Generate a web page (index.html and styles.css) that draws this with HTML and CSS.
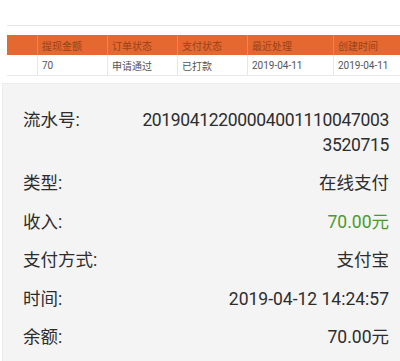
FILE: index.html
```html
<!DOCTYPE html>
<html>
    <head>
        <meta charset="UTF-8">
        <title>提现记录</title>
        <link rel="stylesheet" href="styles.css">
    </head>
    <body>
        <div class="toolbar"></div>
        <table class="records">
            <tr class="head">
                <td class="c0"></td>
                <td class="c1">提现金额</td>
                <td class="c2">订单状态</td>
                <td class="c3">支付状态</td>
                <td class="c4">最近处理</td>
                <td class="c5">创建时间</td>
            </tr>
            <tr>
                <td></td>
                <td>70</td>
                <td>申请通过</td>
                <td>已打款</td>
                <td>2019-04-11</td>
                <td>2019-04-11</td>
            </tr>
        </table>
        <div class="detail">
            <div class="row">
                <div class="label">流水号:</div>
                <div class="value serial">201904122000040011100470033520715</div>
            </div>
            <div class="row">
                <div class="label">类型:</div>
                <div class="value">在线支付</div>
            </div>
            <div class="row">
                <div class="label">收入:</div>
                <div class="value green">70.00元</div>
            </div>
            <div class="row">
                <div class="label">支付方式:</div>
                <div class="value">支付宝</div>
            </div>
            <div class="row">
                <div class="label">时间:</div>
                <div class="value">2019-04-12 14:24:57</div>
            </div>
            <div class="row">
                <div class="label">余额:</div>
                <div class="value">70.00元</div>
            </div>
        </div>
    </body>
</html>
```
FILE: styles.css
```css
html, body{
    height: 361px;
    overflow: hidden;
}
body{
    margin: 0;
    background: #fff;
    font-family: Roboto, "Noto Sans CJK SC", sans-serif;
    color: #2d2d2d;
}

.toolbar{
    height: 25px;
    margin-left: 7px;
    border-bottom: 1px solid #e6e6e6;
}

.records{
    margin: 9px 0 0 7px;
    width: 393px;
    border-collapse: collapse;
    table-layout: fixed;
    font-size: 10px;
    color: #555;
}
.records td{
    height: 20px;
    padding: 0 0 0 4px;
    border-left: 1px solid #e8e8e8;
    border-bottom: 1px solid #e8e8e8;
    white-space: nowrap;
    overflow: hidden;
}
.records td:first-child{
    border-left: none;
}
.records .head td{
    background: #e4682f;
    color: #9a4219;
    border-left: 1px solid #ea8557;
    border-bottom: none;
}
.records .head td:first-child{
    border-left: none;
}
.c0{ width: 26px; }
.c1{ width: 65px; }
.c2{ width: 65px; }
.c3{ width: 65px; }
.c4{ width: 81px; }

.detail{
    margin: 7px 0 0 2px;
    padding: 17px 11px 4px 20px;
    background: #f4f4f4;
    border-top: 1px solid #ececec;
    border-left: 1px solid #ececec;
}
.row{
    display: flex;
    justify-content: space-between;
    padding: 6.75px 0;
    font-size: 17.5px;
    line-height: 25px;
}
.label{
    flex: none;
}
.value{
    text-align: right;
}
.serial{
    width: 250px;
    letter-spacing: -0.35px;
    word-break: break-all;
}
.green{
    color: #4b9a2c;
}
```
